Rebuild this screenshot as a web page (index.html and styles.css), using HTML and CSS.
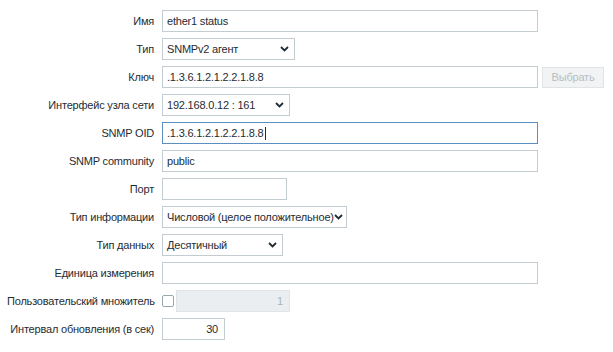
FILE: index.html
```html
<!DOCTYPE html>
<html lang="ru">

<head>
    <meta charset="UTF-8">
    <title>Элемент данных</title>
    <link rel="stylesheet" href="styles.css">
</head>

<body>
    <div class="form">
        <label class="lbl">Имя</label>
        <div class="field"><div class="inp w-long">ether1 status</div></div>

        <label class="lbl">Тип</label>
        <div class="field">
            <div class="sel w-type">SNMPv2 агент
                <svg class="chev" width="9" height="6" viewBox="0 0 9 6"><path d="M1 1 L4.5 4.5 L8 1" fill="none" stroke="#1f2c33" stroke-width="1.8"/></svg>
            </div>
        </div>

        <label class="lbl">Ключ</label>
        <div class="field">
            <div class="inp w-long">.1.3.6.1.2.1.2.2.1.8.8</div>
            <button class="btn" disabled>Выбрать</button>
        </div>

        <label class="lbl">Интерфейс узла сети</label>
        <div class="field">
            <div class="sel w-iface">192.168.0.12 : 161
                <svg class="chev" width="9" height="6" viewBox="0 0 9 6"><path d="M1 1 L4.5 4.5 L8 1" fill="none" stroke="#1f2c33" stroke-width="1.8"/></svg>
            </div>
        </div>

        <label class="lbl">SNMP OID</label>
        <div class="field"><div class="inp w-long focus">.1.3.6.1.2.1.2.2.1.8.8<span class="caret"></span></div></div>

        <label class="lbl">SNMP community</label>
        <div class="field"><div class="inp w-long">public</div></div>

        <label class="lbl">Порт</label>
        <div class="field"><div class="inp w-port"></div></div>

        <label class="lbl">Тип информации</label>
        <div class="field">
            <div class="sel w-info">Числовой (целое положительное)
                <svg class="chev" width="9" height="6" viewBox="0 0 9 6"><path d="M1 1 L4.5 4.5 L8 1" fill="none" stroke="#1f2c33" stroke-width="1.8"/></svg>
            </div>
        </div>

        <label class="lbl">Тип данных</label>
        <div class="field">
            <div class="sel w-data">Десятичный
                <svg class="chev" width="9" height="6" viewBox="0 0 9 6"><path d="M1 1 L4.5 4.5 L8 1" fill="none" stroke="#1f2c33" stroke-width="1.8"/></svg>
            </div>
        </div>

        <label class="lbl">Единица измерения</label>
        <div class="field"><div class="inp w-long"></div></div>

        <label class="lbl">Пользовательский множитель</label>
        <div class="field">
            <span class="check"></span>
            <div class="inp w-mult disabled num">1</div>
        </div>

        <label class="lbl">Интервал обновления (в сек)</label>
        <div class="field"><div class="inp w-delay num">30</div></div>

        <span class="lbl"></span>
        <div class="field"><div class="table-stub"></div></div>
    </div>
</body>

</html>
```

FILE: styles.css
```css
body {
    margin: 0;
    background-color: #fff;
    font-family: "Liberation Sans", Arial, sans-serif;
    font-size: 11px;
    letter-spacing: -0.2px;
    color: #1f2c33;
}

.form {
    display: grid;
    grid-template-columns: 147px auto;
    column-gap: 8px;
    row-gap: 6px;
    padding: 10px 0 0 7px;
}

.lbl {
    height: 22px;
    line-height: 22px;
    text-align: right;
    white-space: nowrap;
}

.field {
    display: flex;
    align-items: center;
    height: 22px;
}

.inp,
.sel {
    box-sizing: border-box;
    height: 22px;
    line-height: 20px;
    padding: 0 5px 0 4px;
    border: 1px solid #c3ccd1;
    background-color: #fff;
    white-space: nowrap;
}

.sel {
    display: flex;
    justify-content: space-between;
    align-items: center;
    padding-right: 5px;
}

.chev {
    flex-shrink: 0;
}

.focus {
    border-color: #5a8fbf;
}

.caret {
    display: inline-block;
    width: 1px;
    height: 13px;
    margin-left: 1px;
    vertical-align: -3px;
    background-color: #1f2c33;
}

.num {
    text-align: right;
    padding-right: 6px;
}

.disabled {
    background-color: #ebeef0;
    border-color: #dfe4e7;
    color: #a9b2b7;
}

.w-long { width: 376px; }
.w-type { width: 133px; }
.w-iface { width: 128px; }
.w-port { width: 125px; }
.w-info { width: 185px; }
.w-data { width: 121px; }
.w-mult { width: 114px; }
.w-delay { width: 63px; }

.btn {
    box-sizing: border-box;
    height: 21px;
    width: 62px;
    margin-left: 4px;
    padding: 0;
    font-family: inherit;
    font-size: 11px;
    letter-spacing: -0.2px;
    color: #b5bec3;
    background-color: #f2f3f4;
    border: 1px solid #e0e4e6;
}

.check {
    box-sizing: border-box;
    width: 12px;
    height: 12px;
    margin-right: 2px;
    border: 1px solid #9aa7ae;
    border-radius: 2px;
    background-color: #fff;
}

.table-stub {
    align-self: flex-end;
    width: 451px;
    height: 2px;
    border-top: 1px solid #eef0f1;
}
```
